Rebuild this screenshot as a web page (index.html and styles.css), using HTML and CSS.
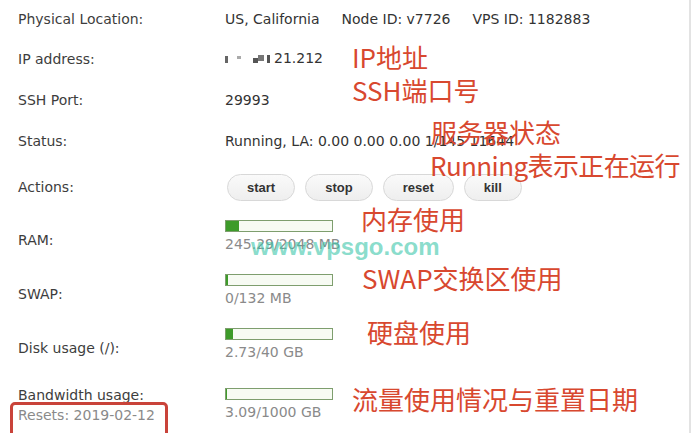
FILE: index.html
```html
<!DOCTYPE html>
<html lang="en">
<head>
<meta charset="utf-8">
<title>VPS Info</title>
<link rel="stylesheet" href="styles.css">
</head>
<body>
<div class="page">
  <div class="panel">
    <div class="row r1">
      <div class="label">Physical Location:</div>
      <div class="value">US, California<span class="sep">Node ID: v7726</span><span class="sep">VPS ID: 1182883</span></div>
    </div>
    <div class="row">
      <div class="label">IP address:</div>
      <div class="value"><span class="mask"><i class="m m1"></i><i class="m m2"></i><i class="m m3"></i><i class="m m4"></i><i class="m m5"></i></span>21.212</div>
    </div>
    <div class="row">
      <div class="label">SSH Port:</div>
      <div class="value">29993</div>
    </div>
    <div class="row">
      <div class="label">Status:</div>
      <div class="value">Running, LA: 0.00 0.00 0.00 1/145 11644</div>
    </div>
    <div class="row actions">
      <div class="label">Actions:</div>
      <div class="value buttons">
        <button class="btn">start</button>
        <button class="btn">stop</button>
        <button class="btn">reset</button>
        <button class="btn">kill</button>
      </div>
    </div>
    <div class="row usage">
      <div class="label">RAM:</div>
      <div class="value">
        <div class="bar"><div class="fill" style="width:12%"></div></div>
        <div class="sub">245.29/2048 MB</div>
      </div>
    </div>
    <div class="row usage">
      <div class="label">SWAP:</div>
      <div class="value">
        <div class="bar"><div class="fill" style="width:1.5%"></div></div>
        <div class="sub">0/132 MB</div>
      </div>
    </div>
    <div class="row usage">
      <div class="label">Disk usage (/):</div>
      <div class="value">
        <div class="bar"><div class="fill" style="width:7%"></div></div>
        <div class="sub">2.73/40 GB</div>
      </div>
    </div>
    <div class="row usage bw">
      <div class="label">Bandwidth usage:<div class="resets">Resets: 2019-02-12</div></div>
      <div class="value">
        <div class="bar"><div class="fill" style="width:1%"></div></div>
        <div class="sub">3.09/1000 GB</div>
      </div>
    </div>
  </div>

  <div class="watermark">www.vpsgo.com</div>
  <div class="note n-ip">IP地址</div>
  <div class="note n-ssh">SSH端口号</div>
  <div class="note n-status">服务器状态</div>
  <div class="note n-run">Running表示正在运行</div>
  <div class="note n-ram">内存使用</div>
  <div class="note n-swap">SWAP交换区使用</div>
  <div class="note n-disk">硬盘使用</div>
  <div class="note n-bw">流量使用情况与重置日期</div>
  <div class="redbox"></div>
</div>
</body>
</html>
```
FILE: styles.css
```css
html, body {
  margin: 0;
  padding: 0;
  background: #ffffff;
}
body {
  font-family: "DejaVu Sans", Verdana, sans-serif;
  font-size: 14px;
  color: #333333;
  overflow: hidden;
}
.page {
  position: relative;
  width: 693px;
  height: 433px;
  overflow: hidden;
}
.panel {
  width: 691px;
  height: 433px;
  border-right: 2px solid #e3e3e3;
  padding-left: 18px;
  box-sizing: border-box;
}
.row {
  display: grid;
  grid-template-columns: 207px 1fr;
  align-items: center;
  height: 41px;
  line-height: 16px;
}
.row.r1 {
  height: 38px;
}
.label {
  color: #3d3d3d;
}
.value {
  color: #333333;
}
.sep {
  margin-left: 22px;
}
.mask {
  display: inline-flex;
  align-items: center;
  margin-right: 4px;
  vertical-align: middle;
  height: 16px;
}
.m {
  display: inline-block;
  background: #6e6e6e;
}
.m1 { width: 3px; height: 7px; margin-right: 9px; background: #666; }
.m2 { width: 4px; height: 3px; margin-right: 12px; margin-top: -4px; background: #aaa; }
.m3 { width: 5px; height: 5px; margin-top: 2px; background: #555; }
.m4 { width: 6px; height: 6px; margin-right: 3px; margin-top: -2px; background: #777; }
.m5 { width: 3px; height: 8px; background: #555; }

.row.actions {
  height: 52px;
}
.buttons {
  display: flex;
  gap: 10px;
  margin-left: 2px;
}
.btn {
  font-family: "Liberation Sans", Arial, sans-serif;
  font-weight: bold;
  font-size: 13px;
  color: #333333;
  height: 27px;
  padding: 0 19px;
  border: 1px solid #d8d8d8;
  border-radius: 14px;
  background: linear-gradient(#fafafa, #eeeeee);
  line-height: 25px;
}
.row.usage {
  height: 54px;
  align-items: start;
  padding-top: 7px;
  box-sizing: border-box;
}
.row.usage .label {
  padding-top: 12px;
}
.bar {
  width: 108px;
  height: 12px;
  border: 1px solid #7e9e6e;
  box-sizing: border-box;
  background: #f7fbf3;
}
.fill {
  height: 100%;
  background: #3d9b2a;
}
.sub {
  color: #8a8a8a;
  margin-top: 4px;
}
.row.usage.bw {
  height: 60px;
  padding-top: 13px;
}
.row.usage.bw .label {
  padding-top: 0;
  margin-top: -3px;
  line-height: 20px;
}
.resets {
  color: #8a8a8a;
}

.watermark {
  position: absolute;
  left: 251px;
  top: 235px;
  font-family: "Liberation Sans", Arial, sans-serif;
  font-weight: bold;
  font-size: 24px;
  line-height: 24px;
  color: rgba(60, 198, 170, 0.62);
}
.note {
  position: absolute;
  font-family: "Noto Sans CJK SC", "Noto Sans", sans-serif;
  font-size: 26px;
  line-height: 26px;
  color: #d8482f;
  white-space: nowrap;
}
.n-ip { left: 352px; top: 44px; }
.n-ssh { left: 352px; top: 77px; }
.n-status { left: 431px; top: 119px; }
.n-run { left: 430px; top: 152px; letter-spacing: -0.6px; }
.n-ram { left: 361px; top: 206px; }
.n-swap { left: 362px; top: 265px; }
.n-disk { left: 367px; top: 319px; }
.n-bw { left: 352px; top: 386px; }
.redbox {
  position: absolute;
  left: 10px;
  top: 402px;
  width: 158px;
  height: 50px;
  border: 3px solid #c9433a;
  border-radius: 5px;
  box-sizing: border-box;
}
```
